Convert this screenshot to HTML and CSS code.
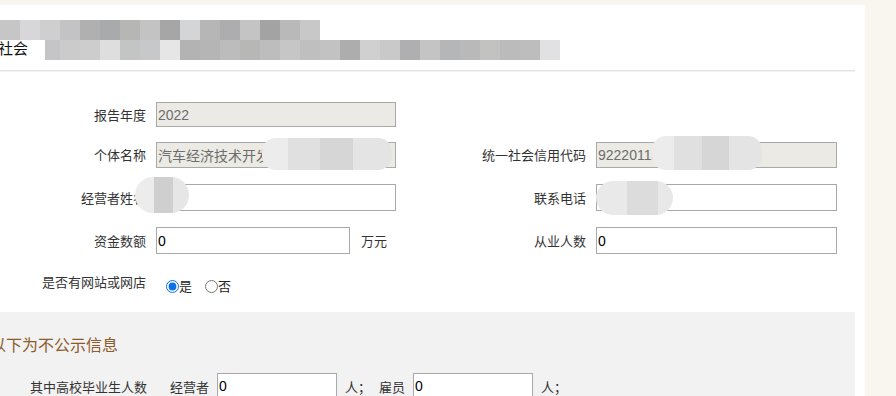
FILE: index.html
```html
<!DOCTYPE html>
<html lang="zh-CN">
<head>
<meta charset="utf-8">
<title>年度报告</title>
<link rel="stylesheet" href="styles.css">
</head>
<body>
<div class="page">
  <div class="panel">
    <div class="head">
      <h1 class="title">社会</h1>
      <div class="mosaic m1"></div>
      <div class="mosaic m2"></div>
    </div>

    <form class="form">
      <div class="row r1">
        <label class="lbl">报告年度</label>
        <div class="cell"><input class="inp ro" type="text" value="2022" disabled></div>
        <span></span><span></span>
      </div>

      <div class="row r2">
        <label class="lbl">个体名称</label>
        <div class="cell">
          <input class="inp ro" type="text" value="汽车经济技术开发区" disabled>
          <span class="blob b-name"></span>
        </div>
        <label class="lbl">统一社会信用代码</label>
        <div class="cell">
          <input class="inp ro" type="text" value="92220113" disabled>
          <span class="blob b-code"></span>
        </div>
      </div>

      <div class="row r3">
        <label class="lbl">经营者姓名</label>
        <div class="cell">
          <input class="inp" type="text" value="">
          <span class="blob b-person"></span>
        </div>
        <label class="lbl">联系电话</label>
        <div class="cell">
          <input class="inp" type="text" value="">
          <span class="blob b-phone"></span>
        </div>
      </div>

      <div class="row r4">
        <label class="lbl">资金数额</label>
        <div class="cell"><input class="inp short" type="text" value="0"><span class="unit">万元</span></div>
        <label class="lbl">从业人数</label>
        <div class="cell"><input class="inp" type="text" value="0"></div>
      </div>

      <div class="row r5">
        <label class="lbl">是否有网站或网店</label>
        <div class="cell radios">
          <input class="radio" type="radio" name="web" checked><span class="opt">是</span>
          <input class="radio r-second" type="radio" name="web"><span class="opt">否</span>
        </div>
      </div>
    </form>

    <section class="private">
      <h2 class="ptitle">以下为不公示信息</h2>
      <div class="prow">
        <span class="plbl">其中高校毕业生人数</span>
        <span class="ptxt first">经营者</span>
        <input class="inp pin" type="text" value="0">
        <span class="ptxt unit2">人；</span>
        <span class="ptxt">雇员</span>
        <input class="inp pin" type="text" value="0">
        <span class="ptxt unit2">人；</span>
      </div>
    </section>
  </div>
</div>
</body>
</html>
```

FILE: styles.css
```css
* { box-sizing: border-box; }

html, body {
  margin: 0;
  padding: 0;
  background: #f9f6ef;
  font-family: "Noto Sans CJK SC", "Liberation Sans", sans-serif;
  font-size: 13px;
  color: #333;
  overflow: hidden;
}

.page {
  padding-top: 5px;
  height: 396px;
}

.panel {
  width: 865px;
  padding-right: 10px;
  background: #fff;
  min-height: 391px;
}

.head {
  position: relative;
  height: 66px;
  border-bottom: 1px solid #e2e2e2;
  box-shadow: 0 1px 0 #f4f4f4;
}

.title {
  margin: 0;
  position: absolute;
  left: -2px;
  top: 33px;
  font-size: 15px;
  font-weight: normal;
  line-height: 20px;
  color: #111;
}

.mosaic {
  position: absolute;
  height: 20px;
}

.m1 {
  left: 0;
  top: 15px;
  width: 320px;
  background: linear-gradient(to right,
    #c6c6c6 0 20px, #d7d7d9 20px 40px, #cfcfcf 40px 60px, #c3c3c5 60px 80px,
    #b0b0b0 80px 100px, #a9aaab 100px 120px, #b6b7b5 120px 140px, #c3c3c3 140px 160px,
    #a6a6a6 160px 180px, #d4d5d7 180px 200px, #b6b6b6 200px 220px, #adadaf 220px 240px,
    #c4c4c4 240px 260px, #a3a3a3 260px 280px, #b9b9b9 280px 300px, #c8c8c8 300px 320px);
}

.m2 {
  left: 45px;
  top: 35px;
  width: 515px;
  height: 20px;
  background: linear-gradient(to right,
    #c5c5c7 0 15px, #cbcbcb 15px 35px, #cdcdcd 35px 55px, #dedede 55px 75px,
    #c3c5c4 75px 95px, #c6c8ca 95px 115px, #e6e6e6 115px 135px, #b3b3b3 135px 155px,
    #b5b5b5 155px 175px, #bcbcbc 175px 195px, #b7b8b6 195px 215px, #bdbdbd 215px 235px,
    #c6c6c6 235px 255px, #bfbfbf 255px 275px, #c2c2c2 275px 295px, #adadad 295px 315px,
    #d0d0d0 315px 335px, #c9c9c9 335px 355px, #afafb1 355px 375px, #c4c4c4 375px 395px,
    #b4b6b8 395px 415px, #b9b9b9 415px 435px, #c2c2c0 435px 455px, #bbbbbb 455px 475px,
    #bdbdbd 475px 495px, #e1e1e3 495px 515px);
}

.form {
  padding-top: 31px;
}

.row {
  display: grid;
  grid-template-columns: 146px 250px 190px 251px;
  align-items: center;
}

.r1 { margin-bottom: 15px; }
.r2, .r3 { margin-bottom: 16px; }
.r4 { margin-bottom: 14px; }

.lbl {
  text-align: right;
  white-space: nowrap;
  color: #333;
  line-height: 20px;
}

.cell {
  position: relative;
  padding-left: 10px;
  display: flex;
  align-items: center;
}

.inp {
  width: 241px;
  height: 27px;
  border: 1px solid #a9a9a9;
  background: #fff;
  padding: 0 1px;
  font-family: "Liberation Sans", "Noto Sans CJK SC", sans-serif;
  font-size: 14px;
  color: #000;
  outline: none;
  margin: 0;
}

.ro {
  height: 26px;
  background: #ebeae4;
  color: #6d6d6d;
}

.r1 .ro { height: 25px; width: 240px; }

.short { width: 194px; }

.unit {
  margin-left: 11px;
  color: #333;
}

.blob {
  position: absolute;
  border-radius: 14px;
  background: linear-gradient(to right, #ececec 0 20%, #e0e0e0 20% 45%, #d6d6d6 45% 70%, #e4e4e4 70% 100%);
}

.b-name { left: 116px; top: -4px; width: 130px; height: 32px; }
.b-code { left: 66px; top: -6px; width: 110px; height: 34px; }
.b-person { left: -11px; top: -7px; width: 54px; height: 36px; border-radius: 18px;
  background: linear-gradient(to right, #ececec 0 35%, #cfcfcf 35% 70%, #e6e6e6 70% 100%); }
.b-phone { left: 10px; top: -3px; width: 77px; height: 34px; border-radius: 17px;
  background: linear-gradient(to right, #e9e9e9 0 40%, #dcdcdc 40% 80%, #e8e8e8 80% 100%); }

.radios {
  padding-left: 20px;
  margin-top: 8px;
}

.radio {
  width: 13px;
  height: 13px;
  margin: 0;
  accent-color: #0b72e8;
}

.opt {
  color: #222;
  line-height: 20px;
}

.r-second { margin-left: 13px; }

.private {
  margin-top: 16px;
  background: #f2f2f2;
  padding-top: 21px;
  height: 100px;
}

.ptitle {
  margin: 0 0 18px 0;
  font-size: 16px;
  font-weight: normal;
  line-height: 22px;
  color: #8d5b2b;
  text-indent: -10px;
}

.prow {
  display: flex;
  align-items: center;
  padding-left: 30px;
  white-space: nowrap;
}

.plbl { width: 117px; }

.ptxt { color: #333; }

.first { margin-left: 23px; margin-right: 8px; }

.pin {
  width: 120px;
  height: 26px;
}

.unit2 { margin-left: 8px; margin-right: 8px; }
.unit2 + .ptxt { margin-right: 8px; }
```
